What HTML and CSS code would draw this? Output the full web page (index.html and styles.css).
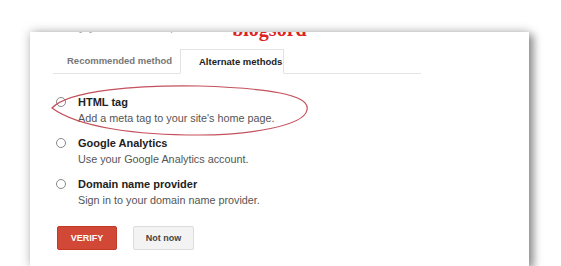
FILE: index.html
```html
<!DOCTYPE html>
<html lang="en">
<head>
  <meta charset="UTF-8">
  <title>Verify ownership</title>
  <link rel="stylesheet" href="styles.css">
</head>
<body>

<div class="card">
  <div class="head">
    <span class="head-grey">Verify your ownership of</span>
    <span class="head-red">blogsord</span>
  </div>

  <div class="tabs">
    <div class="tab">Recommended method</div>
    <div class="tab active">Alternate methods</div>
  </div>

  <ul class="methods">
    <li>
      <span class="radio"></span>
      <div>
        <div class="title">HTML tag</div>
        <div class="desc">Add a meta tag to your site's home page.</div>
      </div>
    </li>
    <li>
      <span class="radio"></span>
      <div>
        <div class="title">Google Analytics</div>
        <div class="desc">Use your Google Analytics account.</div>
      </div>
    </li>
    <li>
      <span class="radio"></span>
      <div>
        <div class="title">Domain name provider</div>
        <div class="desc">Sign in to your domain name provider.</div>
      </div>
    </li>
  </ul>

  <div class="actions">
    <button class="btn verify">VERIFY</button>
    <button class="btn later">Not now</button>
  </div>

  <!-- hand drawn circle round the first option -->
  <svg class="mark" width="270" height="60" viewBox="0 0 270 60">
    <path d="M3 26 C 20 8, 90 3, 150 4 C 215 6, 262 12, 258 28 C 255 44, 200 53, 150 53 C 90 53, 30 46, 3 26 Z" fill="none" stroke="#c4505c" stroke-width="1.2"/>
  </svg>
</div>

</body>
</html>
```

FILE: styles.css
```css
body {
  margin: 0;
  background: #fff;
  font-family: "Liberation Sans", Arial, sans-serif;
  overflow: hidden;
}
.card {
  position: relative;
  margin: 32px 0 0 30px;
  width: 499px;
  height: 234px;
  background: #fff;
  overflow: hidden;
  padding-left: 23px;
  box-sizing: border-box;
  box-shadow: 0 0 10px rgba(0,0,0,0.25), 5px 3px 8px rgba(0,0,0,0.35);
}
.head {
  margin-top: -16px;
  height: 33px;
  line-height: 20px;
  white-space: nowrap;
}
.head-grey {
  font-size: 13px;
  color: #aaa;
  position: relative;
  top: -3px;
}
.head-red {
  margin-left: 36px;
  font-family: "Liberation Serif", serif;
  font-size: 20px;
  font-weight: bold;
  color: #dd2222;
  position: relative;
  top: 3px;
}
.tabs {
  display: flex;
  width: 368px;
  height: 24px;
  border-bottom: 1px solid #e3e3e3;
  font-size: 9.5px;
  font-weight: bold;
  white-space: nowrap;
}
.tab {
  line-height: 24px;
  padding-left: 14px;
  width: 127px;
  box-sizing: border-box;
  color: #777;
}
.tab.active {
  width: 104px;
  padding-left: 18px;
  color: #222;
  border: 1px solid #e3e3e3;
  border-bottom: 1px solid #fff;
  height: 25px;
  line-height: 23px;
  background: #fff;
}
.methods {
  list-style: none;
  margin: 20px 0 0;
  padding: 0 0 0 3px;
}
.methods li {
  display: flex;
  gap: 12px;
  margin-bottom: 9px;
}
.radio {
  width: 8px;
  height: 8px;
  margin-top: 3px;
  border: 1px solid #888;
  border-radius: 50%;
  flex: none;
}
.title {
  font-size: 11px;
  font-weight: bold;
  color: #222;
  line-height: 16px;
}
.desc {
  font-size: 10.8px;
  color: #555;
  line-height: 16px;
}
.actions {
  display: flex;
  gap: 16px;
  margin-top: 18px;
  padding-left: 4px;
}
.btn {
  height: 24px;
  border-radius: 2px;
  font-family: "Liberation Sans", Arial, sans-serif;
  font-size: 9px;
  font-weight: bold;
  cursor: pointer;
}
.verify {
  width: 60px;
  background: #d14836;
  border: 1px solid #c53727;
  color: #fff;
}
.later {
  width: 61px;
  background: #f3f3f3;
  border: 1px solid #dcdcdc;
  color: #444;
}
.mark {
  position: absolute;
  left: 19px;
  top: 50px;
}
```
